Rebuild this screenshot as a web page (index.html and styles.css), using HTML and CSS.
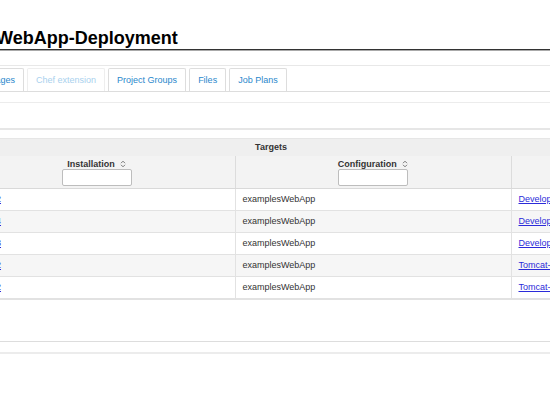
FILE: index.html
```html
<!DOCTYPE html>
<html>
<head lang="en">
    <meta charset="UTF-8">
    <title>examplesWebApp-Deployment</title>
    <link rel="stylesheet" href="styles.css">
</head>
<body>
<div class="page">
    <h1 class="page-title">examplesWebApp-Deployment</h1>
    <div class="tab-bar">
        <a class="tab" href="javascript:void(0);">Details</a>
        <a class="tab" href="javascript:void(0);">Packages</a>
        <a class="tab tab-disabled" href="javascript:void(0);">Chef extension</a>
        <a class="tab" href="javascript:void(0);">Project Groups</a>
        <a class="tab" href="javascript:void(0);">Files</a>
        <a class="tab" href="javascript:void(0);">Job Plans</a>
    </div>
    <div class="toolbar"></div>
    <table class="targets">
        <colgroup>
            <col class="col-wide">
            <col class="col-wide">
            <col class="col-narrow">
        </colgroup>
        <thead>
        <tr class="group-row">
            <th colspan="3">Targets</th>
        </tr>
        <tr class="head-row">
            <th>
                <div class="head-label">Installation
                    <svg class="sort" width="6" height="8" viewBox="0 0 6 8"><path d="M1 3.2 L3 1.2 L5 3.2 M1 4.8 L3 6.8 L5 4.8" fill="none" stroke="#777" stroke-width="1"/></svg>
                </div>
                <input type="text" class="filter">
            </th>
            <th>
                <div class="head-label">Configuration
                    <svg class="sort" width="6" height="8" viewBox="0 0 6 8"><path d="M1 3.2 L3 1.2 L5 3.2 M1 4.8 L3 6.8 L5 4.8" fill="none" stroke="#777" stroke-width="1"/></svg>
                </div>
                <input type="text" class="filter">
            </th>
            <th></th>
        </tr>
        </thead>
        <tbody>
        <tr>
            <td><a href="javascript:void(0);">tomcat-2</a></td>
            <td>examplesWebApp</td>
            <td><a href="javascript:void(0);">Development</a></td>
        </tr>
        <tr class="odd">
            <td><a href="javascript:void(0);">tomcat-4</a></td>
            <td>examplesWebApp</td>
            <td><a href="javascript:void(0);">Development</a></td>
        </tr>
        <tr>
            <td><a href="javascript:void(0);">tomcat-3</a></td>
            <td>examplesWebApp</td>
            <td><a href="javascript:void(0);">Development</a></td>
        </tr>
        <tr class="odd">
            <td><a href="javascript:void(0);">tomcat-2</a></td>
            <td>examplesWebApp</td>
            <td><a href="javascript:void(0);">Tomcat-Prod</a></td>
        </tr>
        <tr>
            <td><a href="javascript:void(0);">tomcat-2</a></td>
            <td>examplesWebApp</td>
            <td><a href="javascript:void(0);">Tomcat-Prod</a></td>
        </tr>
        </tbody>
    </table>
    <div class="footer-bar"></div>
</div>
</body>
</html>
```

FILE: styles.css
```css
html, body {
    margin: 0px;
    padding: 0px;
    background: #ffffff;
    overflow: hidden;
}
body {
    font-family: "Liberation Sans", Arial, sans-serif;
    font-size: 9px;
    color: #333333;
}
.page {
    margin-left: -90px;
    width: 720px;
}
.page-title {
    margin: 27px 0px 0px 0px;
    padding-left: 4px;
    height: 22px;
    line-height: 22px;
    font-size: 18px;
    font-weight: bold;
    color: #000000;
    border-bottom: 1px solid #333333;
    box-shadow: 0px 1px 0px #aaaaaa;
}
.tab-bar {
    margin-top: 15px;
    padding: 2px 0px 0px 8px;
    display: flex;
    gap: 3px;
    border-top: 1px solid #e8e8e8;
    border-bottom: 1px solid #dddddd;
}
.tab {
    display: block;
    padding: 0px 8px;
    height: 22px;
    line-height: 22px;
    border: 1px solid #dddddd;
    border-bottom: none;
    border-radius: 2px 2px 0px 0px;
    background: #ffffff;
    color: #2a88cc;
    text-decoration: none;
    white-space: nowrap;
}
.tab-disabled {
    color: #a9d1ee;
    border-color: #eeeeee;
}
.toolbar {
    margin-top: 10px;
    height: 25px;
    border-top: 1px solid #ececec;
    border-bottom: 2px solid #e6e6e6;
}
.targets {
    margin: 8px 0px 0px 49px;
    width: 624px;
    table-layout: fixed;
    border-collapse: collapse;
}
.col-wide {
    width: 276px;
}
.col-narrow {
    width: 72px;
}
.targets th {
    font-weight: bold;
    color: #333333;
    text-align: center;
    white-space: nowrap;
}
.group-row th {
    height: 17px;
    padding: 0px;
    line-height: 17px;
    background: #efefef;
    border-top: 1px solid #e6e6e6;
}
.head-row th {
    height: 27px;
    padding: 3px 0px 2px 0px;
    background: #f3f3f3;
    border-left: 1px solid #dcdcdc;
    border-bottom: 1px solid #d9d9d9;
    vertical-align: top;
}
.head-row th:first-child {
    border-left: none;
}
.head-label {
    height: 10px;
    line-height: 10px;
}
.sort {
    margin-left: 3px;
    vertical-align: -1px;
}
.filter {
    display: block;
    margin: 0px auto;
    box-sizing: border-box;
    width: 70px;
    height: 17px;
    border: 1px solid #bdbdbd;
    border-radius: 2px;
    background: #ffffff;
}
.targets td {
    height: 21px;
    padding: 0px 7px;
    line-height: 21px;
    border-bottom: 1px solid #e2e2e2;
    border-left: 1px solid #e2e2e2;
    white-space: nowrap;
    overflow: hidden;
}
.targets td:first-child {
    border-left: none;
}
.targets tr.odd td {
    background: #f6f6f6;
}
.targets tr:last-child td {
    border-bottom: 2px solid #e2e2e2;
}
.targets td a {
    color: #2b2bd9;
    text-decoration: underline;
}
.footer-bar {
    margin-top: 41px;
    height: 10px;
    border-top: 1px solid #dddddd;
    border-bottom: 2px solid #ececec;
}
```
